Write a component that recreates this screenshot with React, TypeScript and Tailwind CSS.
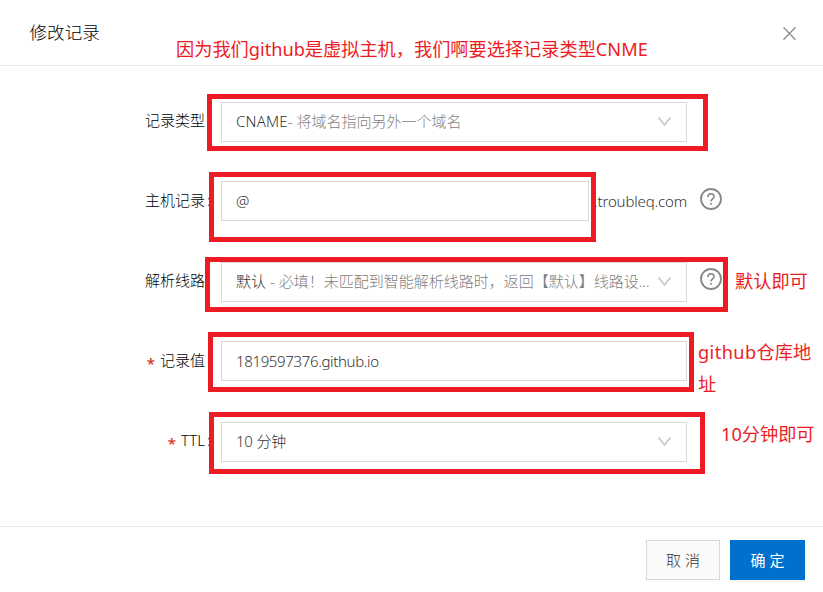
import type { ReactNode } from "react";

function Chevron() {
  return (
    <svg className="mb-[1px] mr-[15px] h-[9px] w-[13px] shrink-0" viewBox="0 0 13 9" fill="none" stroke="#bfbfbf" strokeWidth="1.3">
      <path d="M0.5 0.5 L6.5 8 L12.5 0.5" />
    </svg>
  );
}

function Help({ className }: { className: string }) {
  return (
    <svg className={`ml-[13px] h-[22px] w-[22px] shrink-0 ${className}`} viewBox="0 0 22 22" fill="none" stroke="#888" strokeWidth="1.8">
      <circle cx="11" cy="11" r="10" />
      <path d="M7.9 9 C7.9 4.8 14.1 4.8 14.1 8.6 C14.1 11 11 10.7 11 13.6" strokeWidth="1.6" />
      <path d="M11 14.9 V16.7" />
    </svg>
  );
}

type RowProps = { label: string; required?: boolean; className: string; labelClass: string; children: ReactNode };

function Row({ label, required, className, labelClass, children }: RowProps) {
  return (
    <div className={`flex h-10 items-center ${className}`}>
      <div className={`flex w-[212px] shrink-0 items-center justify-end text-black ${labelClass}`}>
        {required && <span className="mr-[5px] h-[18px] text-[15px] font-medium leading-[24px] text-[#d93026]">*</span>}
        <span>{label}</span>
        <span className="ml-[2px] w-[5px]">:</span>
      </div>
      <div className="w-[9px] shrink-0" />
      {children}
    </div>
  );
}

const field = "flex h-10 shrink-0 items-center border border-[#d9d9d9] bg-white pl-[14px] text-[#333]";

function Note({ className, children }: { className: string; children: ReactNode }) {
  return <div className={`absolute whitespace-nowrap text-[18.2px] font-normal leading-8 text-[#ed1c24] ${className}`}>{children}</div>;
}

export default function App() {
  return (
    <div className="relative flex h-[592px] w-[823px] flex-col overflow-hidden bg-white font-['Noto_Sans','Noto_Sans_CJK_SC',sans-serif] text-[15px] font-light leading-6">
      <header className="flex h-[66px] shrink-0 items-center justify-between border-b border-[#e8e8e8] pl-[29.5px] pr-[27px]">
        <h1 className="pb-[2px] text-[17.6px] font-light text-black">修改记录</h1>
        <svg className="mt-[2px] h-[13px] w-[13px]" viewBox="0 0 13 13" fill="none" stroke="#888" strokeWidth="1.3">
          <path d="M0.5 0.3 L12.5 12.7 M12.5 0.3 L0.5 12.7" />
        </svg>
      </header>

      <main className="flex flex-1 flex-col">
        <Row label="记录类型" className="mt-9" labelClass="pb-[5px]">
          <div className={`${field} w-[466px]`}>
            <span className="flex-1 whitespace-nowrap pb-[2px]">
              <span className="tracking-[0.2px]">CNAME</span><span className="text-[#808080]">- 将域名指向另外一个域名</span>
            </span>
            <Chevron />
          </div>
        </Row>
        <Row label="主机记录" className="mt-[39px]" labelClass="pb-[3px]">
          <div className={`${field} w-[368px]`}>
            <span>@</span>
          </div>
          <span className="ml-[5px] w-[93px] whitespace-nowrap tracking-[-0.15px] text-[#333]">.troubleq.com</span>
          <Help className="mb-[5px]" />
        </Row>
        <Row label="解析线路" className="mt-[41px]" labelClass="pb-[5px]">
          <div className={`${field} w-[466px]`}>
            <span className="flex-1 whitespace-nowrap pb-[2px]">
              默认 <span className="text-[#808080]">- 必填！未匹配到智能解析线路时，返回【默认】线路设...</span>
            </span>
            <Chevron />
          </div>
          <Help className="mb-[7px]" />
        </Row>
        <Row label="记录值" required className="mt-[39px]" labelClass="pb-[3px]">
          <div className={`${field} w-[466px]`}>
            <span className="tracking-[-0.35px]">1819597376.github.io</span>
          </div>
        </Row>
        <Row label="TTL" required className="mt-[41px]" labelClass="pb-[5px]">
          <div className={`${field} w-[466px]`}>
            <span className="flex-1 pb-[2px] tracking-[-0.2px]">10 分钟</span>
            <Chevron />
          </div>
        </Row>
      </main>

      <footer className="flex h-[66px] shrink-0 justify-end gap-[10px] border-t border-[#e8e8e8] pr-[18px] pt-[13px]">
        <button className="h-10 w-[74px] border border-[#d9d9d9] bg-[#fafafa] text-[#333] shadow-[0_2px_0_rgba(0,0,0,0.015)]">取 消</button>
        <button className="h-10 w-[75px] bg-[#0070cc] font-normal text-white shadow-[0_2px_0_rgba(0,0,0,0.045)]">确 定</button>
      </footer>

      <div className="absolute left-[207px] top-[94px] h-[57px] w-[501px] border-[5px] border-[#ed1c24]" />
      <div className="absolute left-[209px] top-[172px] h-[70px] w-[387px] border-[5px] border-[#ed1c24]" />
      <div className="absolute left-[205px] top-[257px] h-[55px] w-[523px] border-[5px] border-[#ed1c24]" />
      <div className="absolute left-[208px] top-[332px] h-[60px] w-[486px] border-[5px] border-[#ed1c24]" />
      <div className="absolute left-[209px] top-[412px] h-[62px] w-[496px] border-[5px] border-[#ed1c24]" />

      <Note className="left-[176px] top-[33px]">因为我们github是虚拟主机，我们啊要选择记录类型CNME</Note>
      <Note className="left-[735px] top-[265px]">默认即可</Note>
      <Note className="left-[698px] top-[336px]"><span className="tracking-[0.4px]">github</span>仓库地<br />址</Note>
      <Note className="left-[721px] top-[418px]">10分钟即可</Note>
    </div>
  );
}
